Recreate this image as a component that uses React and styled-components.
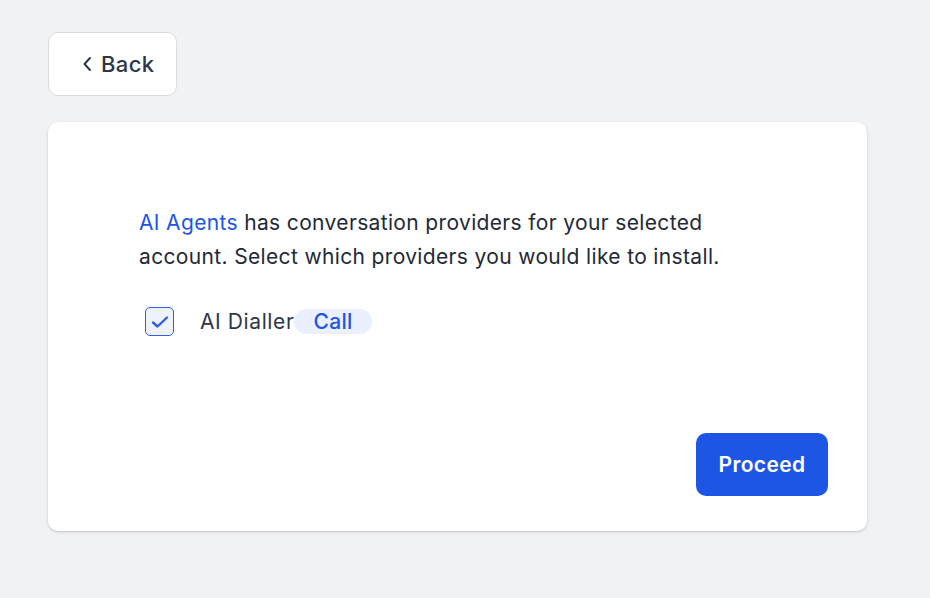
import React, { useState } from 'react';
import styled, { createGlobalStyle } from 'styled-components';

const GlobalStyle = createGlobalStyle`
	body {
		margin: 0;
		background: #f1f2f4;
		font-family: Inter, "Noto Sans", "Liberation Sans", sans-serif;
		letter-spacing: 0.35px;
		color: #1f2937;
	}
`;

const Page = styled.div`
	padding: 32px 63px 40px 48px;
	display: flex;
	flex-direction: column;
	align-items: flex-start;
	gap: 26px;
`;

const BackButton = styled.button`
	display: flex;
	align-items: center;
	gap: 9px;
	height: 64px;
	width: 129px;
	padding: 0 0 0 33px;
	background: #ffffff;
	border: 1px solid #d8dbe1;
	border-radius: 10px;
	font-family: inherit;
	letter-spacing: inherit;
	font-size: 22px;
	font-weight: 500;
	color: #2d3748;
	cursor: pointer;
`;

const Card = styled.div`
	align-self: stretch;
	height: 409px;
	box-sizing: border-box;
	background: #ffffff;
	border-radius: 10px;
	box-shadow: 0 1px 3px rgba(16, 24, 40, 0.16), 0 1px 2px rgba(16, 24, 40, 0.06);
	padding: 84px 39px 35px 91px;
	display: flex;
	flex-direction: column;
`;

const Intro = styled.p`
	margin: 0;
	font-size: 21px;
	line-height: 34px;
	color: #1f2937;
	max-width: 620px;
`;

const Link = styled.a`
	color: #1d55e5;
	text-decoration: none;
	cursor: pointer;
`;

const ProviderRow = styled.label`
	display: flex;
	align-items: center;
	margin-top: 33px;
	padding-left: 6px;
	cursor: pointer;
`;

const Box = styled.span`
	width: 29px;
	height: 29px;
	box-sizing: border-box;
	border: 1.5px solid ${p => (p.checked ? '#2f5fe0' : '#c8ccd4')};
	background: ${p => (p.checked ? '#eef2fd' : '#fff')};
	border-radius: 5px;
	display: flex;
	align-items: center;
	justify-content: center;
	margin-right: 26px;
`;

const Name = styled.span`
	font-size: 21px;
	letter-spacing: 0.6px;
	color: #2d3748;
`;

const Badge = styled.span`
	background: #eaf0fd;
	color: #1d55e5;
	font-size: 21px;
	font-weight: 500;
	border-radius: 13px;
	padding: 0 19px;
	line-height: 25px;
`;

const Footer = styled.div`
	margin-top: auto;
	display: flex;
	justify-content: flex-end;
`;

const Proceed = styled.button`
	width: 132px;
	height: 63px;
	background: #1d55e5;
	color: #ffffff;
	border: none;
	border-radius: 10px;
	font-family: inherit;
	letter-spacing: inherit;
	font-size: 21px;
	font-weight: 600;
	cursor: pointer;
`;

export default function App() {
	const [checked, setChecked] = useState(true);

	return (
		<>
			<GlobalStyle />
			<Page>
				<BackButton>
					<svg width="10" height="16" viewBox="0 0 10 16" fill="none">
						<path d="M8 2L2.5 8L8 14" stroke="#2d3748" strokeWidth="2" strokeLinecap="round" strokeLinejoin="round" />
					</svg>
					Back
				</BackButton>
				<Card>
					<Intro>
						<Link>AI Agents</Link> has conversation providers for your selected account. Select which providers you would like to install.
					</Intro>
					<ProviderRow onClick={() => setChecked(!checked)}>
						<Box checked={checked}>
							{checked && (
								<svg width="18" height="14" viewBox="0 0 18 14" fill="none">
									<path d="M2 7.5L6.5 11.5L16 2.5" stroke="#2f5fe0" strokeWidth="2.4" strokeLinecap="round" strokeLinejoin="round" />
								</svg>
							)}
						</Box>
						<Name>AI Dialler</Name>
						<Badge>Call</Badge>
					</ProviderRow>
					<Footer>
						<Proceed>Proceed</Proceed>
					</Footer>
				</Card>
			</Page>
		</>
	);
}
